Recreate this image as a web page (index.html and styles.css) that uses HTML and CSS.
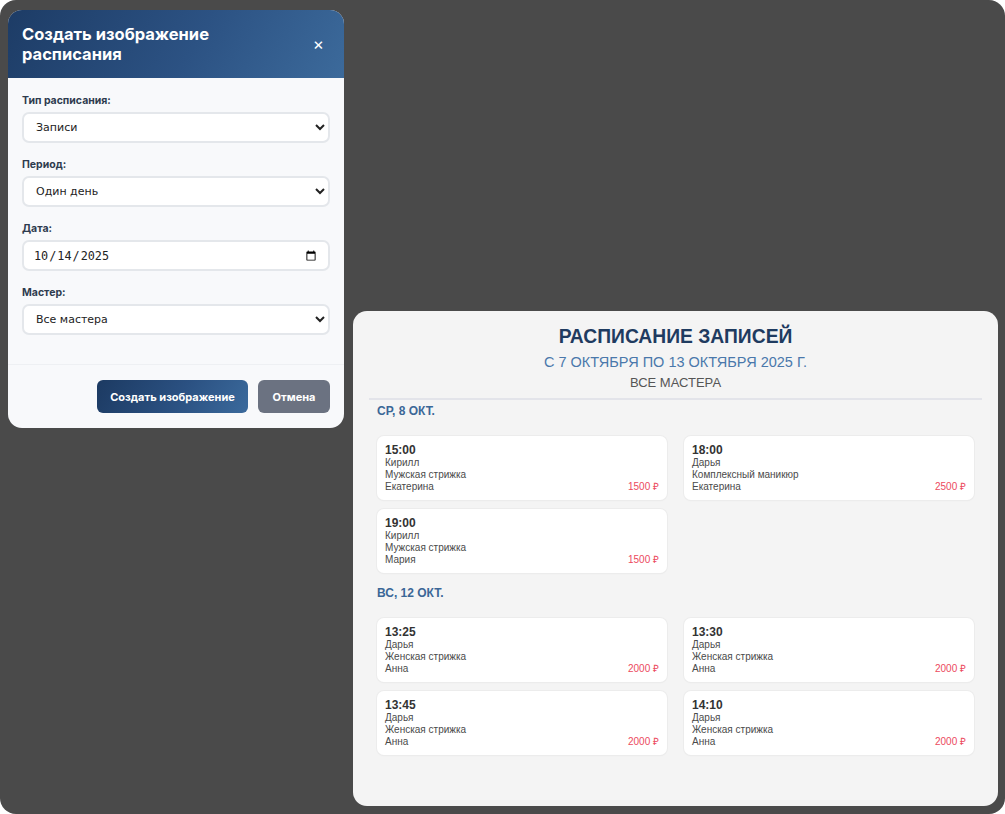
FILE: index.html
```html
<!DOCTYPE html>
<html lang="ru">
<head>
<meta charset="utf-8">
<title>Расписание</title>
<link rel="stylesheet" href="styles.css">
</head>
<body>
<div class="frame">
  <div class="modal">
    <div class="modal-header">
      <h2 class="modal-title">Создать изображение расписания</h2>
      <span class="close">×</span>
    </div>
    <div class="modal-body">
      <div class="field">
        <label class="label">Тип расписания:</label>
        <select class="control"><option>Записи</option></select>
      </div>
      <div class="field">
        <label class="label">Период:</label>
        <select class="control"><option>Один день</option></select>
      </div>
      <div class="field">
        <label class="label">Дата:</label>
        <input class="control date" type="date" value="2025-10-14">
      </div>
      <div class="field">
        <label class="label">Мастер:</label>
        <select class="control"><option>Все мастера</option></select>
      </div>
    </div>
    <div class="modal-footer">
      <button class="btn btn-primary">Создать изображение</button>
      <button class="btn btn-cancel">Отмена</button>
    </div>
  </div>

  <div class="sheet">
    <div class="sheet-head">
      <h1 class="sheet-title">РАСПИСАНИЕ ЗАПИСЕЙ</h1>
      <div class="sheet-sub">С 7 ОКТЯБРЯ ПО 13 ОКТЯБРЯ 2025 Г.</div>
      <div class="sheet-masters">ВСЕ МАСТЕРА</div>
    </div>

    <div class="day">
      <div class="day-title">СР, 8 ОКТ.</div>
      <div class="grid">
        <div class="card">
          <div class="time">15:00</div>
          <div class="line">Кирилл</div>
          <div class="line">Мужская стрижка</div>
          <div class="line row"><span>Екатерина</span><span class="price">1500 ₽</span></div>
        </div>
        <div class="card">
          <div class="time">18:00</div>
          <div class="line">Дарья</div>
          <div class="line">Комплексный маникюр</div>
          <div class="line row"><span>Екатерина</span><span class="price">2500 ₽</span></div>
        </div>
        <div class="card">
          <div class="time">19:00</div>
          <div class="line">Кирилл</div>
          <div class="line">Мужская стрижка</div>
          <div class="line row"><span>Мария</span><span class="price">1500 ₽</span></div>
        </div>
      </div>
    </div>

    <div class="day">
      <div class="day-title">ВС, 12 ОКТ.</div>
      <div class="grid">
        <div class="card">
          <div class="time">13:25</div>
          <div class="line">Дарья</div>
          <div class="line">Женская стрижка</div>
          <div class="line row"><span>Анна</span><span class="price">2000 ₽</span></div>
        </div>
        <div class="card">
          <div class="time">13:30</div>
          <div class="line">Дарья</div>
          <div class="line">Женская стрижка</div>
          <div class="line row"><span>Анна</span><span class="price">2000 ₽</span></div>
        </div>
        <div class="card">
          <div class="time">13:45</div>
          <div class="line">Дарья</div>
          <div class="line">Женская стрижка</div>
          <div class="line row"><span>Анна</span><span class="price">2000 ₽</span></div>
        </div>
        <div class="card">
          <div class="time">14:10</div>
          <div class="line">Дарья</div>
          <div class="line">Женская стрижка</div>
          <div class="line row"><span>Анна</span><span class="price">2000 ₽</span></div>
        </div>
      </div>
    </div>
  </div>
</div>
</body>
</html>
```

FILE: styles.css
```css
* { box-sizing: border-box; }
html, body { margin: 0; padding: 0; background: #ffffff; }
body { width: 1005px; height: 814px; overflow: hidden; }

.frame {
  position: relative;
  width: 1005px;
  height: 814px;
  background: #4a4a4a;
  border-radius: 16px;
  overflow: hidden;
}

/* ---------- Modal ---------- */
.modal {
  position: absolute;
  left: 8px;
  top: 10px;
  width: 336px;
  height: 418px;
  background: #f8f9fb;
  border-radius: 14px;
  overflow: hidden;
  font-family: Inter, "Noto Sans", sans-serif;
  display: flex;
  flex-direction: column;
}
.modal-header {
  height: 68px;
  padding: 13px 14px;
  background: linear-gradient(120deg, #1d3c66 0%, #2c5283 55%, #3c6a9b 100%);
  display: flex;
  align-items: center;
  justify-content: space-between;
}
.modal-title {
  margin: 0;
  color: #ffffff;
  font-size: 16.5px;
  font-weight: 700;
  line-height: 20px;
  width: 230px;
}
.close {
  color: #ffffff;
  font-size: 17px;
  font-weight: 400;
  line-height: 20px;
  margin-right: 6px;
}
.modal-body {
  padding: 16px 14px 0;
  height: 287px;
  border-bottom: 1px solid #eef0f3;
}
.field { margin-bottom: 15px; }
.label {
  display: block;
  font-size: 10.5px;
  font-weight: 700;
  color: #2e3b4e;
  line-height: 14px;
  margin-bottom: 4px;
}
.control {
  display: block;
  width: 308px;
  height: 31px;
  border: 2px solid #e4e7eb;
  border-radius: 7px;
  background: #ffffff;
  font-family: "DejaVu Sans", sans-serif;
  font-size: 11px;
  color: #222222;
  padding: 0 8px;
}
.date {
  font-family: "DejaVu Sans Mono", monospace;
  font-size: 11.8px;
  padding: 0 9px;
}
.modal-footer {
  flex: 1;
  display: flex;
  justify-content: flex-end;
  align-items: flex-start;
  gap: 10px;
  padding: 15px 14px 0;
}
.btn {
  height: 33px;
  border: none;
  border-radius: 6px;
  color: #ffffff;
  font-family: Inter, "Noto Sans", sans-serif;
  font-size: 11px;
  font-weight: 700;
  padding: 0 6px;
  white-space: nowrap;
}
.btn-primary {
  width: 151px;
  background: linear-gradient(120deg, #1c3a62 0%, #2b5182 55%, #3b6a9c 100%);
}
.btn-cancel {
  width: 72px;
  background: #6b7281;
}

/* ---------- Schedule sheet ---------- */
.sheet {
  position: absolute;
  left: 353px;
  top: 311px;
  width: 645px;
  height: 495px;
  background: #f4f4f4;
  border-radius: 14px;
  padding: 14px 16px;
  font-family: "Liberation Sans", Arial, sans-serif;
}
.sheet-head {
  text-align: center;
  padding-bottom: 7px;
  border-bottom: 2px solid #e3e4ea;
}
.sheet-title {
  margin: 0;
  font-size: 19.3px;
  line-height: 24px;
  font-weight: 700;
  color: #1f3b60;
}
.sheet-sub {
  margin-top: 4px;
  font-size: 14.5px;
  line-height: 18px;
  color: #4a78ab;
}
.sheet-masters {
  margin-top: 4px;
  font-size: 13px;
  line-height: 16px;
  color: #555555;
}
.day { padding: 0 8px; }
.day-title {
  margin-top: 3px;
  font-size: 12px;
  line-height: 16px;
  font-weight: 700;
  color: #3b6797;
  margin-bottom: 17px;
}
.day + .day .day-title { margin-top: 12px; }
.grid {
  display: grid;
  grid-template-columns: 1fr 1fr;
  column-gap: 17px;
  row-gap: 9px;
}
.card {
  background: #ffffff;
  border-radius: 7px;
  padding: 7px 8px 7px;
  box-shadow: 0 0 0 1px #ececec, 0 1px 2px rgba(0,0,0,0.04);
}
.time {
  font-size: 12px;
  font-weight: 700;
  line-height: 14px;
  color: #333333;
}
.line {
  font-size: 10px;
  line-height: 12px;
  color: #4a4a4a;
}
.row {
  display: flex;
  justify-content: space-between;
}
.price { color: #ec4a5e; }
```
